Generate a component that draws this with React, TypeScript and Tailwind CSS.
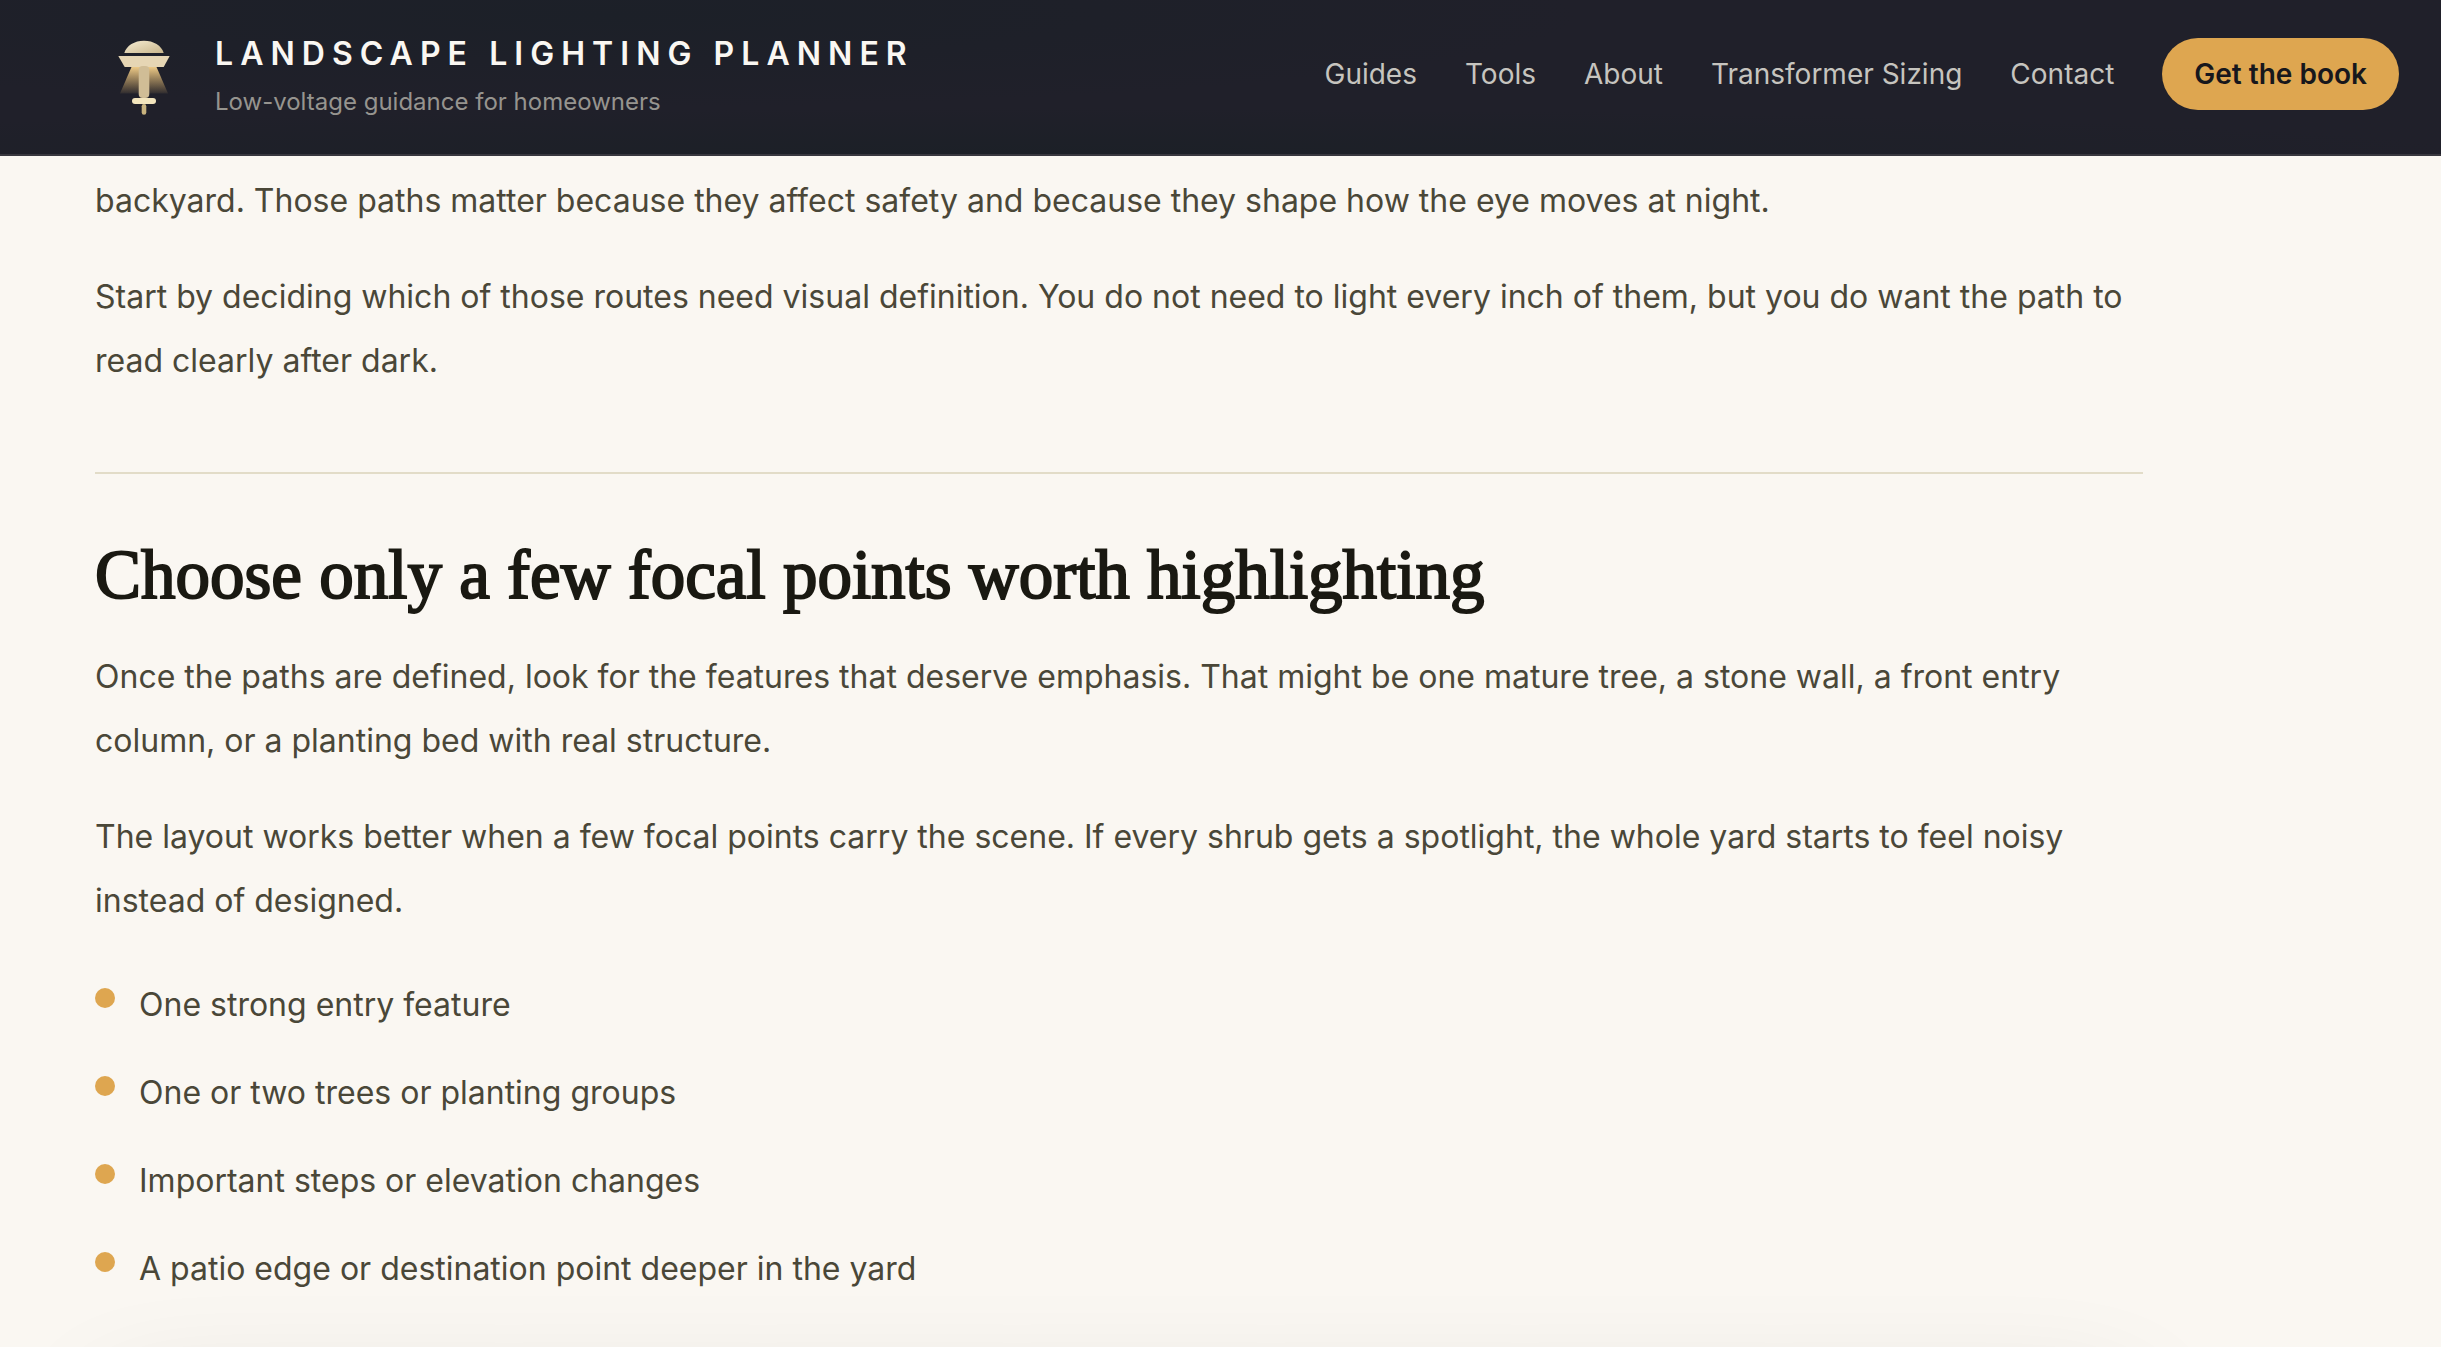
const navLinks = ["Guides", "Tools", "About", "Transformer Sizing", "Contact"];

const focalPoints = [
  "One strong entry feature",
  "One or two trees or planting groups",
  "Important steps or elevation changes",
  "A patio edge or destination point deeper in the yard",
];

function LampLogo() {
  return (
    <svg viewBox="0 -3 96 96" className="size-24 shrink-0" aria-hidden="true">
      <defs>
        <linearGradient id="dome" x1="0" y1="0" x2="1" y2="1">
          <stop offset="0" stopColor="#f5ecd2" />
          <stop offset="1" stopColor="#c9b68c" />
        </linearGradient>
        <linearGradient id="beam" x1="0" y1="0" x2="0" y2="1">
          <stop offset="0" stopColor="#f0cd8a" />
          <stop offset="1" stopColor="#f0c070" stopOpacity="0.08" />
        </linearGradient>
      </defs>
      <path d="M36.7 37.5H61.3L73 64.5H25Z" fill="url(#beam)" />
      <path d="M29.3 24C31.5 16.5 39.5 11.8 49 11.8S66.5 16.5 68.7 24Z" fill="url(#dome)" />
      <path d="M23.3 27H74.7L68.7 38H29.7Z" fill="#e6d6b4" />
      <rect x="43.7" y="37" width="10.6" height="32" rx="4" fill="#d0bd96" />
      <rect x="46.7" y="75" width="4.6" height="10.7" rx="2.3" fill="#c9b37e" />
      <rect x="37" y="69" width="24" height="6" rx="3" fill="#f3e5bd" />
    </svg>
  );
}

export default function App() {
  return (
    <div className="flex h-screen flex-col overflow-hidden bg-[#faf7f2] font-['Inter',sans-serif] text-[#4a4738]">
      <header className="flex shrink-0 items-center justify-between border-b-2 border-[#38373f] bg-[#20202a] bg-[radial-gradient(ellipse_40%_60%_at_25%_10%,#1c2028,transparent),radial-gradient(ellipse_60%_30%_at_42%_100%,#1c2027,transparent)] pt-[26px] pr-[42px] pb-8 pl-[95px]">
        <a href="#" className="flex items-center gap-6">
          <LampLogo />
          <span className="flex flex-col gap-2 pt-1">
            <span className="text-[32px] leading-[44px] font-semibold tracking-[0.22em] text-[#faf7f2] uppercase">
              Landscape Lighting Planner
            </span>
            <span className="text-2xl leading-9 text-[#96948f]">
              Low-voltage guidance for homeowners
            </span>
          </span>
        </a>
        <nav className="flex items-center gap-12 text-[28px] leading-10 text-[#c6c4bf]">
          {navLinks.map((label) => (
            <a key={label} href="#">
              {label}
            </a>
          ))}
          <a href="#" className="rounded-full bg-[#dea650] px-8 py-4 font-semibold text-[#17171c]">
            Get the book
          </a>
        </nav>
      </header>

      <main className="max-w-[2143px] pt-[13px] pl-[95px] text-[32px] leading-[64px]">
        <p>
          backyard. Those paths matter because they affect safety and because they shape how the eye moves at night.
        </p>
        <p className="mt-8">
          Start by deciding which of those routes need visual definition. You do not need to light every inch of them,
          but you do want the path to read clearly after dark.
        </p>

        <section className="mt-[79px] border-t-2 border-[#e2dcc8] pt-16">
          <h2 className="font-['Liberation_Serif',serif] text-[69px] leading-[75px] text-[#1a1912] [-webkit-text-stroke:2px_#1a1912]">
            Choose only a few focal points worth highlighting
          </h2>
          <p className="mt-8">
            Once the paths are defined, look for the features that deserve emphasis. That might be one mature tree, a
            stone wall, a front entry column, or a planting bed with real structure.
          </p>
          <p className="mt-8">
            The layout works better when a few focal points carry the scene. If every shrub gets a spotlight, the whole
            yard starts to feel noisy instead of designed.
          </p>
          <ul className="mt-10 flex flex-col gap-6">
            {focalPoints.map((point) => (
              <li key={point} className="flex items-start gap-6">
                <span className="mt-[15px] size-5 shrink-0 rounded-full bg-[#dea650]" />
                {point}
              </li>
            ))}
          </ul>
        </section>

        <div className="mt-16 h-96 rounded-[48px] bg-white shadow-[0_40px_120px_rgba(26,25,18,0.14)]" />
      </main>
    </div>
  );
}
